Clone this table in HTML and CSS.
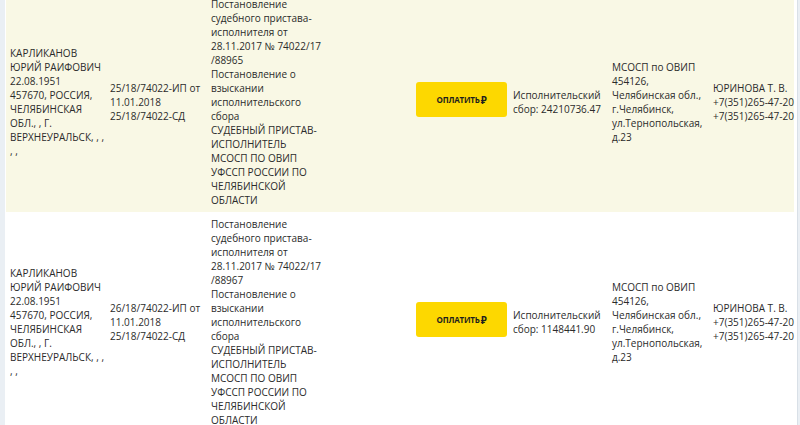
FILE: index.html
```html
<!DOCTYPE html>
<html lang="ru">
<head>
<meta charset="utf-8">
<link rel="stylesheet" href="styles.css">
</head>
<body>
<div class="page">
  <table class="debts">
    <colgroup>
      <col class="c1"><col class="c2"><col class="c3"><col class="c4"><col class="c5"><col class="c6"><col class="c7">
    </colgroup>
    <tbody>
      <tr class="odd">
        <td>КАРЛИКАНОВ<br>ЮРИЙ РАИФОВИЧ<br>22.08.1951<br>457670, РОССИЯ,<br>ЧЕЛЯБИНСКАЯ<br>ОБЛ., , Г.<br>ВЕРХНЕУРАЛЬСК, , ,<br>, ,</td>
        <td>25/18/74022-ИП от<br>11.01.2018<br>25/18/74022-СД</td>
        <td>Постановление<br>судебного пристава-<br>исполнителя от<br>28.11.2017 № 74022/17<br>/88965<br>Постановление о<br>взыскании<br>исполнительского<br>сбора<br>СУДЕБНЫЙ ПРИСТАВ-<br>ИСПОЛНИТЕЛЬ<br>МСОСП ПО ОВИП<br>УФССП РОССИИ ПО<br>ЧЕЛЯБИНСКОЙ<br>ОБЛАСТИ</td>
        <td class="pay"><button class="btn">ОПЛАТИТЬ<span class="rub">₽</span></button></td>
        <td>Исполнительский<br>сбор: 24210736.47</td>
        <td>МСОСП по ОВИП<br>454126,<br>Челябинская обл.,<br>г.Челябинск,<br>ул.Тернопольская,<br>д.23</td>
        <td>ЮРИНОВА Т. В.<br>+7(351)265-47-20<br>+7(351)265-47-20</td>
      </tr>
      <tr class="even">
        <td>КАРЛИКАНОВ<br>ЮРИЙ РАИФОВИЧ<br>22.08.1951<br>457670, РОССИЯ,<br>ЧЕЛЯБИНСКАЯ<br>ОБЛ., , Г.<br>ВЕРХНЕУРАЛЬСК, , ,<br>, ,</td>
        <td>26/18/74022-ИП от<br>11.01.2018<br>25/18/74022-СД</td>
        <td>Постановление<br>судебного пристава-<br>исполнителя от<br>28.11.2017 № 74022/17<br>/88967<br>Постановление о<br>взыскании<br>исполнительского<br>сбора<br>СУДЕБНЫЙ ПРИСТАВ-<br>ИСПОЛНИТЕЛЬ<br>МСОСП ПО ОВИП<br>УФССП РОССИИ ПО<br>ЧЕЛЯБИНСКОЙ<br>ОБЛАСТИ</td>
        <td class="pay"><button class="btn">ОПЛАТИТЬ<span class="rub">₽</span></button></td>
        <td>Исполнительский<br>сбор: 1148441.90</td>
        <td>МСОСП по ОВИП<br>454126,<br>Челябинская обл.,<br>г.Челябинск,<br>ул.Тернопольская,<br>д.23</td>
        <td>ЮРИНОВА Т. В.<br>+7(351)265-47-20<br>+7(351)265-47-20</td>
      </tr>
    </tbody>
  </table>
</div>
</body>
</html>
```

FILE: styles.css
```css
html, body {
  margin: 0;
  padding: 0;
  background: #eaeff4;
  overflow: hidden;
}
body {
  font-family: "Open Sans", "Noto Sans", sans-serif;
  font-size: 10px;
  line-height: 14px;
  color: #2b2b2b;
}
.page {
  margin: -8px 3px 0 5px;
  padding: 0 2px 0 1px;
  background: #ffffff;
  border-right: 1px solid #d9e0e7;
  width: 789px;
  box-sizing: content-box;
}
.debts {
  border-collapse: collapse;
  table-layout: fixed;
  width: 788px;
}
.c1 { width: 100px; }
.c2 { width: 101px; }
.c3 { width: 205px; }
.c4 { width: 97px; }
.c5 { width: 99px; }
.c6 { width: 101px; }
.c7 { width: 85px; }
.debts td {
  padding: 5px 0 5px 4px;
  vertical-align: middle;
  white-space: nowrap;
}
.odd { background: #f9f8e5; }
.even { background: #ffffff; }
.pay { padding-right: 2px; }
.btn {
  display: flex;
  align-items: center;
  justify-content: center;
  width: 91px;
  height: 35px;
  margin-top: -5px;
  border: 0;
  border-radius: 3px;
  background: #fdd800;
  font-family: "Open Sans", "Noto Sans", sans-serif;
  font-weight: 700;
  font-size: 8px;
  letter-spacing: -0.2px;
  color: #1e1e1e;
  padding: 0;
}
.rub {
  font-size: 10px;
  margin-left: 1px;
}
```
